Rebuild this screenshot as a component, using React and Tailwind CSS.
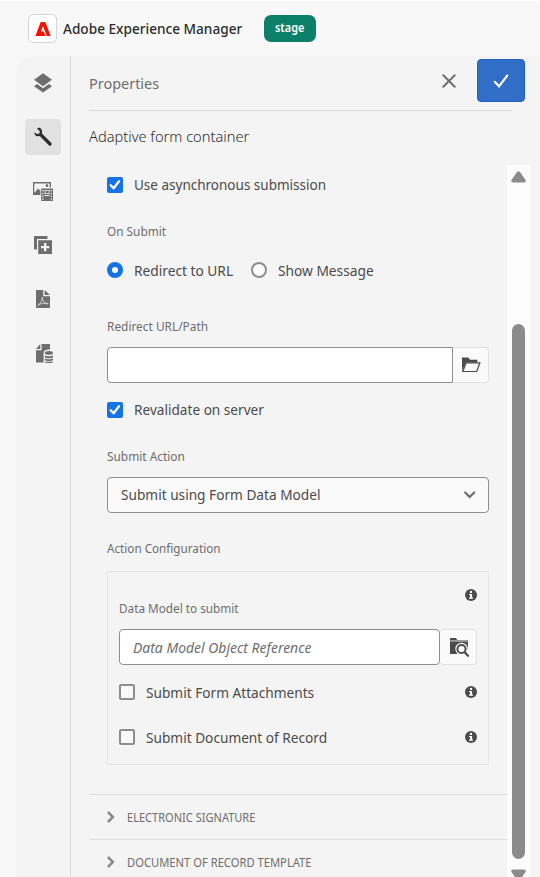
import React from "react";

const cx = (...parts) => parts.filter(Boolean).join(" ");

// Slightly condensed text run
function Text({ className, children }) {
  return <span className={cx("block origin-left whitespace-nowrap", className)}>{children}</span>;
}

function Checkbox({ checked }) {
  if (!checked) return <span className="block size-4 shrink-0 rounded-[2px] border-2 border-[#8e8e8e] bg-[#fafafa]" />;
  return (
    <span className="block size-4 shrink-0 rounded-[2px] bg-[#1473e6]">
      <svg viewBox="0 0 16 16" className="block size-4" fill="none" stroke="#fff" strokeWidth="2.3" strokeLinecap="round" strokeLinejoin="round">
        <path d="M3.7 8.3 6.6 11.3 12 4.3" />
      </svg>
    </span>
  );
}

function Info() {
  return (
    <svg viewBox="0 0 12 12" className="block size-3 shrink-0">
      <circle cx="6" cy="6" r="6" fill="#4b4b4b" />
      <circle cx="6" cy="2.9" r="1.2" fill="#fff" />
      <path d="M4.1 4.9h3v3.6h.9v1.2H4V8.5h1V6.1h-.9z" fill="#fff" />
    </svg>
  );
}

function RailItem({ active, children }) {
  return (
    <div className={cx("flex size-9 items-center justify-center rounded", active && "bg-[#e1e1e1]")}>
      <svg viewBox="0 0 20 20" className="size-5" fill="#6e6e6e">{children}</svg>
    </div>
  );
}

function Section({ children, textClass }) {
  return (
    <div className="ml-[18px] flex h-[45px] shrink-0 items-center border-t border-[#dedede] pl-[18px]">
      <svg viewBox="0 0 8 12" className="mr-[12px] h-3 w-2 shrink-0" fill="none" stroke="#8a8a8a" strokeWidth="2.5">
        <path d="M.9 1 5.9 6 .9 11" />
      </svg>
      <Text className={cx("mt-[2px] text-[12px] text-[#6e6e6e]", textClass)}>{children}</Text>
    </div>
  );
}

export default function App() {
  return (
    <div className="flex h-[877px] w-[540px] flex-col overflow-hidden border-t border-white bg-[#f8f8f8] font-['Noto_Sans','Open_Sans',sans-serif] text-[#4b4b4b]">
      <header className="flex h-[55px] shrink-0 items-center pl-7">
        <div className="flex size-[29px] items-center justify-center rounded-[5px] border border-[#d5d5d5] bg-white">
          <svg viewBox="0 0 16 14" className="h-[14px] w-4" fill="#fa0f00">
            <path d="M5.7 0h4.6L15.6 14h-3.8L8 4.2 5.9 9.6H8.8L10.4 14H.4z" />
          </svg>
        </div>
        <div className="ml-[6px] w-[201px]">
          <Text className="scale-x-[.908] text-[15px] font-medium text-[#2c2c2c]">Adobe Experience Manager</Text>
        </div>
        <div className="flex h-[27px] w-[52px] items-center rounded-[7px] bg-[#0b8068] pl-[11px]">
          <Text className="mt-0 scale-x-[.87] text-[12.5px] font-semibold text-white">stage</Text>
        </div>
      </header>

      <div className="ml-4 flex h-[821px] shrink-0 rounded-tl-[16px] bg-[#f4f4f4]">
        <nav className="flex w-[55px] shrink-0 flex-col items-center gap-[18px] border-r border-[#dcdcdc] pt-[9px]">
          <RailItem>
            <path d="M10 .2 19 6.8 10 13.2 1 6.8z" />
            <path d="M1 13.2 4.1 11.1 10 15.2l5.9-4.1 3.1 2.1-9 6.3z" />
          </RailItem>
          <RailItem active>
            <path fill="#2c2c2c" d="M5.1.9C7.6.3 9.5 2.6 9 5.7c-.1.6 0 .9.4 1.3l9 9.1c1.2 1.3-.8 3.8-2.3 2.5L7.2 9.4c-.4-.4-.8-.4-1.4-.2C3.1 9.8 1 7.9 1.4 5.3l2.4 1.8 2.7-.6.3-2.5-2.9-2.2z" />
          </RailItem>
          <RailItem>
            <path fillRule="evenodd" d="M0 1h18v5.6h-1.3V2.4H1.3V12L5 7.4l2.4 2.4V14H0z" />
            <circle cx="14" cy="4.7" r="1.4" />
            <path fillRule="evenodd" d="M8.2 7.6H20V20H8.2zM9.2 9v1.3h1.3V9zm0 2.9v1.3h1.3v-1.3zm0 2.8V16h1.3v-1.3zm0 2.8v1.3h1.3v-1.3zM17.7 9v1.3H19V9zm0 2.9v1.3H19v-1.3zm0 2.8V16H19v-1.3zm0 2.8v1.3H19v-1.3zM11.6 9v4h5V9zm.8.8h3.4v2.4h-3.4zM11.6 13.9v1h5v-1z" />
          </RailItem>
          <RailItem>
            <path d="M1 1h13.5v3H4v10.5H1z" />
            <path fillRule="evenodd" d="M5.2 5.2H19V19H5.2zM11 8v3H8v2.3h3v3h2.3v-3h3V11h-3V8z" />
          </RailItem>
          <RailItem>
            <path d="M3 1h7.2v6.2H17V19H3zM11.6 1 17 6H11.6z" />
            <path fill="none" stroke="#d9d9d9" strokeWidth="1" d="M9.2 8c.7 2.7-1.8 6.2-4.3 8.7-.5-1.4 6.5-3.1 10.2-2.3-.8 1.7-5-1-5.9-5.2" />
          </RailItem>
          <RailItem>
            <path d="M8.6 1H17v5.6c-3.8-.4-6.4.9-6.4 3.2v9.7H3V7.2h5.6zM7.3 1v5H3z" />
            <ellipse cx="15.9" cy="9.9" rx="4.1" ry="1.8" />
            <path d="M11.8 12.2c1.4 1.4 6.8 1.4 8.2 0v2c-1.4 1.5-6.8 1.5-8.2 0zM11.8 15.2c1.4 1.4 6.8 1.4 8.2 0v1.9c-1.4 1.4-6.8 1.4-8.2 0zM11.8 18.1c1.4 1.2 6.8 1.2 8.2 0v.8c-1.4 1.5-6.8 1.5-8.2 0z" />
          </RailItem>
        </nav>

        <main className="flex w-[469px] flex-col">
          <div className="ml-[18px] flex h-[55px] w-[423px] shrink-0 items-center border-b border-[#dcdcdc]">
            <Text className="w-[353px] shrink-0 scale-x-[.963] text-[15px] text-[#6e6e6e]">Properties</Text>
            <svg viewBox="0 0 14 14" className="-mt-1 h-[14px] w-[14px] shrink-0" fill="none" stroke="#6e6e6e" strokeWidth="2" strokeLinecap="round">
              <path d="M1.3 1.3 12.7 12.7M12.7 1.3 1.3 12.7" />
            </svg>
            <button className="mb-[6px] ml-[21px] flex h-[43px] w-12 shrink-0 items-center justify-center rounded border border-[#1f5fc0] bg-[#326ec8]">
              <svg viewBox="0 0 16 14" className="mt-px h-[14px] w-4" fill="none" stroke="#fff" strokeWidth="2.1" strokeLinecap="round">
                <path d="M1.8 7.8 6 12.3 14.3 1.5" />
              </svg>
            </button>
          </div>
          <div className="flex h-[54px] shrink-0 items-center pb-1 pl-[18px]">
            <Text className="scale-x-[.975] text-[15px] font-light text-[#2c2c2c]">Adaptive form container</Text>
          </div>

          <div className="flex h-[712px] shrink-0">
            <div className="flex w-[436px] shrink-0 flex-col overflow-hidden">
              <div className="flex shrink-0 flex-col pr-[18px] pl-9">
                <label className="flex h-10 items-center gap-[11px]">
                  <Checkbox checked />
                  <Text className="mb-[2px] scale-x-[.9] text-[15px]">Use asynchronous submission</Text>
                </label>
                <div className="flex h-[53px] items-center pt-[2px]">
                  <Text className="scale-x-[.945] text-[12.5px] text-[#6e6e6e]">On Submit</Text>
                </div>
                <div className="flex h-6 items-center">
                  <span className="mr-[11px] size-4 shrink-0 rounded-full border-5 border-[#1473e6] bg-white" />
                  <Text className="w-[118px] scale-x-[.915] text-[15px]">Redirect to URL</Text>
                  <span className="-ml-px mr-[11px] size-4 shrink-0 rounded-full border-2 border-[#8e8e8e] bg-[#fafafa]" />
                  <Text className="scale-x-[.915] text-[15px]">Show Message</Text>
                </div>
                <div className="flex h-[65px] items-center pt-[25px]">
                  <Text className="scale-x-[.95] text-[12.5px] text-[#6e6e6e]">Redirect URL/Path</Text>
                </div>
                <div className="flex h-9">
                  <div className="w-[346px] rounded-l border border-[#8e8e8e] bg-white" />
                  <button className="flex w-9 items-center justify-center rounded-r border border-l-0 border-[#e1e1e1] bg-[#fafafa]">
                    <svg viewBox="0 0 20 16" className="h-4 w-5">
                      <path d="M1 .5h6.3L9 2.8h7.3v2.8H5L1 14z" fill="#4b4b4b" />
                      <path d="M5.2 5.8h13.7l-3.2 8.7H1.8z" fill="#fafafa" stroke="#4b4b4b" strokeWidth="1.2" />
                    </svg>
                  </button>
                </div>
                <label className="flex h-[54px] items-center gap-[11px]">
                  <Checkbox checked />
                  <Text className="mb-[2px] scale-x-[.908] text-[15px]">Revalidate on server</Text>
                </label>
                <div className="flex h-10 items-center">
                  <Text className="scale-x-[.95] text-[12.5px] text-[#6e6e6e]">Submit Action</Text>
                </div>
                <div className="flex h-9 items-center justify-between rounded border border-[#8e8e8e] bg-[#fafafa] pr-3 pl-[13px]">
                  <Text className="mb-[2px] scale-x-[.911] text-[15px]">Submit using Form Data Model</Text>
                  <svg viewBox="0 0 12 8" className="h-2 w-3" fill="none" stroke="#6e6e6e" strokeWidth="2.2" strokeLinecap="round">
                    <path d="M1.2 1.5 5.7 6 10.2 1.5" />
                  </svg>
                </div>
                <div className="flex h-[58px] items-center pt-[15px]">
                  <Text className="scale-x-[.935] text-[12.5px] text-[#6e6e6e]">Action Configuration</Text>
                </div>
                <div className="flex h-[194px] flex-col border border-[#e6e6e6] px-[11px]">
                  <div className="flex h-[57px] justify-between pt-[17px]">
                    <Text className="mt-[11px] scale-x-[.94] text-[12.5px] text-[#6e6e6e]">Data Model to submit</Text>
                    <Info />
                  </div>
                  <div className="flex h-9">
                    <div className="flex w-[321px] items-center rounded border border-[#8e8e8e] bg-white pl-[13px]">
                      <Text className="scale-x-[.93] text-[15px] text-[#6e6e6e] italic">Data Model Object Reference</Text>
                    </div>
                    <button className="flex w-[37px] items-center justify-center rounded border border-l-0 border-[#e1e1e1] bg-[#fafafa] pl-[2px]">
                      <svg viewBox="0 0 20 20" className="size-5 shrink-0">
                        <path d="M1 3V1.8L2 1h5l1.2 2z" fill="#4b4b4b" />
                        <path d="M1 3h18v1.6H1z" fill="#9a9a9a" />
                        <path d="M1 4.6h18V17H1z" fill="#4b4b4b" />
                        <path d="M19 12l1 6-7-1z" fill="#fafafa" />
                        <circle cx="12.5" cy="12" r="6.2" fill="#fafafa" />
                        <circle cx="12.5" cy="12" r="4.1" fill="#fafafa" stroke="#4b4b4b" strokeWidth="2" />
                        <path d="M15.7 15.3 19 18.7" stroke="#4b4b4b" strokeWidth="2.3" strokeLinecap="round" />
                      </svg>
                    </button>
                  </div>
                  <label className="flex h-[54px] items-center">
                    <Checkbox />
                    <Text className="ml-[11px] flex-1 scale-x-[.911] text-[15px]">Submit Form Attachments</Text>
                    <Info />
                  </label>
                  <label className="flex h-9 items-center">
                    <Checkbox />
                    <Text className="ml-[11px] flex-1 scale-x-[.911] text-[15px]">Submit Document of Record</Text>
                    <Info />
                  </label>
                </div>
              </div>
              <div className="h-[29px] shrink-0" />
              <Section textClass="scale-x-[.92]">ELECTRONIC SIGNATURE</Section>
              <Section textClass="scale-x-[.933]">DOCUMENT OF RECORD TEMPLATE</Section>
            </div>

            <div className="flex w-[23px] shrink-0 flex-col items-center overflow-hidden bg-[#fcfcfc] pt-[6px]">
              <svg viewBox="0 0 15 12" className="h-3 w-[15px] shrink-0" fill="#8b8b8b">
                <path d="M6 1Q7.5-.6 9 1L14.5 9Q15.4 11.3 13 11.5H2Q-.4 11.3.5 9z" />
              </svg>
              <div className="mt-[141px] h-[535px] w-[13px] shrink-0 rounded-full bg-[#8b8b8b]" />
              <svg viewBox="0 0 15 12" className="mt-[10px] h-3 w-[15px] shrink-0" fill="#8b8b8b">
                <path d="M6 11Q7.5 12.6 9 11L14.5 3Q15.4.7 13 .5H2Q-.4.7.5 3z" />
              </svg>
            </div>
          </div>
        </main>
      </div>
    </div>
  );
}
